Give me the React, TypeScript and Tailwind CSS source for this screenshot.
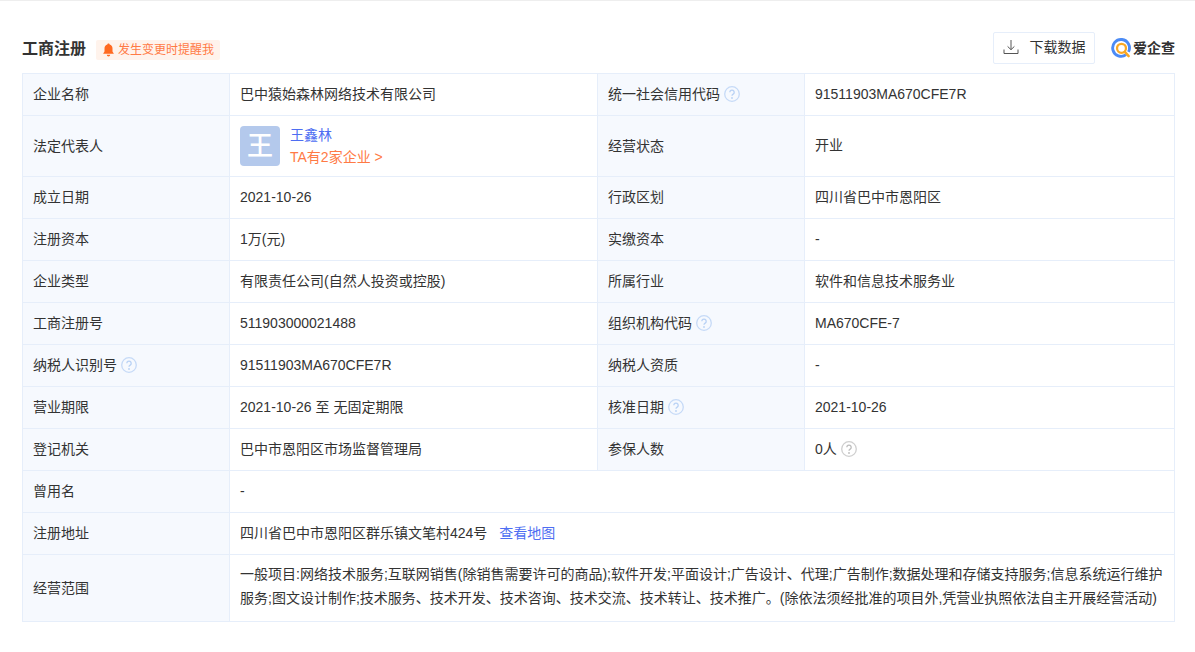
import { ReactNode } from "react";

const Help = ({ gray }: { gray?: boolean }) => (
  <svg viewBox="0 0 16 16" className="ml-[4px] inline-block h-[16px] w-[16px] align-[-3px]">
    <circle cx="8" cy="8" r="7.3" fill="none" stroke={gray ? "#cfcfcf" : "#c6daf7"} strokeWidth="1.3" />
    <path
      d="M5.8 6.2a2.2 2.2 0 1 1 3.4 1.9c-.8.5-1.2.9-1.2 1.7"
      fill="none"
      stroke={gray ? "#bdbdbd" : "#b9d2f5"}
      strokeWidth="1.3"
    />
    <circle cx="8" cy="12" r=".9" fill={gray ? "#bdbdbd" : "#b9d2f5"} />
  </svg>
);

const Th = ({ children, flat }: { children: ReactNode; flat?: boolean }) => (
  <td className={flat ? "border border-[#e6eefa] bg-[#f6f9fe] px-[10px] text-[#333333]" : "border border-[#e6eefa] bg-[#f6f9fe] px-[10px] pb-[2px] text-[#333333]"}>
    {children}
  </td>
);

const Td = ({ children, span, flat }: { children: ReactNode; span?: number; flat?: boolean }) => (
  <td
    colSpan={span}
    className={flat ? "border border-[#e6eefa] px-[10px] text-[#333333]" : "border border-[#e6eefa] px-[10px] pb-[2px] text-[#333333]"}
  >
    {children}
  </td>
);

const Row = ({ a, b, c, d }: { a: ReactNode; b: ReactNode; c: ReactNode; d: ReactNode }) => (
  <tr className="h-[42px]">
    <Th>{a}</Th>
    <Td>{b}</Td>
    <Th>{c}</Th>
    <Td>{d}</Td>
  </tr>
);

export default function App() {
  return (
    <div className="h-[652px] w-[1195px] overflow-hidden border-t border-[#eeeeee] bg-white px-[22px] font-['Liberation_Sans','Noto_Sans_CJK_SC',sans-serif] text-[14px] leading-[20px]">
      {/* Header */}
      <div className="flex h-[72px] items-center justify-between pt-[22px]">
        <div className="mt-[4px] flex items-center">
          <h2 className="mb-[2px] text-[16px] font-bold leading-[24px] text-[#333333]">工商注册</h2>
          <div className="ml-[10px] flex h-[20px] items-center rounded-[2px] bg-[#fff3ec] px-[6px] text-[12px] text-[#ff7a45]">
            <svg viewBox="0 0 12 14" className="mr-[3px] h-[14px] w-[13px]">
              <path
                d="M6 0.6c.7 0 1.1.4 1.1 1 1.9.5 2.9 2 2.9 3.9v3l1.4 2.2H.6L2 8.500v-3c0-1.900 1-3.400 2.900-3.900 0-.6.4-1 1.100-1zM4.300 11.700h3.400a1.700 1.700 0 0 1-3.400 0z"
                fill="#ff6a21"
              />
            </svg>
            发生变更时提醒我
          </div>
        </div>
        <div className="-mr-[2px] flex items-center">
          <button className="flex h-[32px] w-[102px] items-center justify-center rounded-[2px] border border-[#e6eefa] pb-[2px] text-[14px] text-[#333333]">
            <svg viewBox="0 0 16 16" className="mr-[11px] h-[16px] w-[16px]" fill="none" stroke="#555555" strokeWidth="1">
              <path d="M8 1v9.500M4.600 7.400 8 10.700l3.400-3.300M1 10.500v4h14v-4" />
            </svg>
            下载数据
          </button>
          <div className="ml-[16px] flex items-center text-[14px] font-bold text-[#333333]">
            <svg viewBox="0 0 22 22" className="h-[21px] w-[21px]" fill="none">
              <path d="M15.800 17.400A8.800 8.800 0 1 1 18.300 14.500" stroke="#4c8bf5" strokeWidth="3" />
              <circle cx="11" cy="10.800" r="4.700" stroke="#f9a825" strokeWidth="2.400" />
              <path d="M14.500 14.500l4 4.500" stroke="#f9a825" strokeWidth="2.600" strokeLinecap="round" />
            </svg>
            <span className="ml-[1px]">爱企查</span>
          </div>
        </div>
      </div>

      {/* Info table */}
      <table className="w-[1152px] table-fixed border-collapse">
        <colgroup>
          <col className="w-[207px]" />
          <col className="w-[368px]" />
          <col className="w-[207px]" />
          <col className="w-[370px]" />
        </colgroup>
        <tbody>
          <Row
            a="企业名称"
            b="巴中猿始森林网络技术有限公司"
            c={
              <>
                统一社会信用代码
                <Help />
              </>
            }
            d="91511903MA670CFE7R"
          />
          <tr className="h-[61px]">
            <Th flat>法定代表人</Th>
            <Td flat>
              <div className="flex items-center">
                <div className="flex h-[40px] w-[40px] items-center justify-center rounded-[4px] bg-[#b4c9ec] text-[26px] font-medium text-white">
                  王
                </div>
                <div className="ml-[10px]">
                  <div className="leading-[22px] text-[#4e6ef2]">王鑫林</div>
                  <div className="leading-[22px] text-[#ff7a45]">TA有2家企业 &gt;</div>
                </div>
              </div>
            </Td>
            <Th flat>经营状态</Th>
            <Td>开业</Td>
          </tr>
          <Row a="成立日期" b="2021-10-26" c="行政区划" d="四川省巴中市恩阳区" />
          <Row a="注册资本" b="1万(元)" c="实缴资本" d="-" />
          <Row a="企业类型" b="有限责任公司(自然人投资或控股)" c="所属行业" d="软件和信息技术服务业" />
          <Row
            a="工商注册号"
            b="511903000021488"
            c={
              <>
                组织机构代码
                <Help />
              </>
            }
            d="MA670CFE-7"
          />
          <Row
            a={
              <>
                纳税人识别号
                <Help />
              </>
            }
            b="91511903MA670CFE7R"
            c="纳税人资质"
            d="-"
          />
          <Row
            a="营业期限"
            b="2021-10-26 至 无固定期限"
            c={
              <>
                核准日期
                <Help />
              </>
            }
            d="2021-10-26"
          />
          <Row
            a="登记机关"
            b="巴中市恩阳区市场监督管理局"
            c="参保人数"
            d={
              <>
                0人
                <Help gray />
              </>
            }
          />
          <tr className="h-[42px]">
            <Th>曾用名</Th>
            <Td span={3}>-</Td>
          </tr>
          <tr className="h-[42px]">
            <Th>注册地址</Th>
            <Td span={3}>
              四川省巴中市恩阳区群乐镇文笔村424号
              <span className="ml-[12px] text-[#4e6ef2]">查看地图</span>
            </Td>
          </tr>
          <tr className="h-[67px]">
            <Th flat>经营范围</Th>
            <Td span={3} flat>
              <div className="pb-[5px] leading-[24px]">
                一般项目:网络技术服务;互联网销售(除销售需要许可的商品);软件开发;平面设计;广告设计、代理;广告制作;数据处理和存储支持服务;信息系统运行维护服务;图文设计制作;技术服务、技术开发、技术咨询、技术交流、技术转让、技术推广。(除依法须经批准的项目外,凭营业执照依法自主开展经营活动)
              </div>
            </Td>
          </tr>
        </tbody>
      </table>
    </div>
  );
}
